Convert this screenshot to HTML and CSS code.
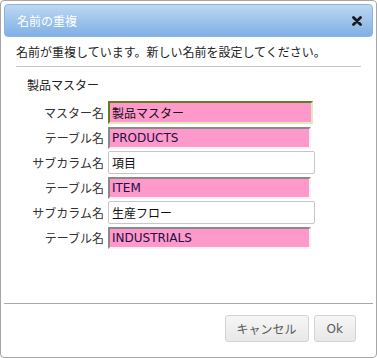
FILE: index.html
```html
<!DOCTYPE html>
<html lang="ja">
<head>
  <meta charset="UTF-8">
  <title>名前の重複</title>
  <link rel="stylesheet" href="styles.css">
</head>
<body>
  <div class="dialog">
    <div class="titlebar">
      <span class="title">名前の重複</span>
      <span class="close">
        <svg width="10" height="10" viewBox="0 0 10 10">
          <path d="M1.5 1.5 L8.5 8.5 M8.5 1.5 L1.5 8.5" stroke="#1a1a1a" stroke-width="2.8" stroke-linecap="round"/>
        </svg>
      </span>
    </div>
    <div class="content">
      <p class="message">名前が重複しています。新しい名前を設定してください。</p>
      <div class="rule"></div>
      <p class="section">製品マスター</p>
      <div class="form">
        <label>マスター名</label>
        <input class="field pink focus" value="製品マスター">
        <label>テーブル名</label>
        <input class="field pink" value="PRODUCTS" readonly>
        <label>サブカラム名</label>
        <input class="field plain" value="項目">
        <label>テーブル名</label>
        <input class="field pink" value="ITEM" readonly>
        <label>サブカラム名</label>
        <input class="field plain" value="生産フロー">
        <label>テーブル名</label>
        <input class="field pink" value="INDUSTRIALS" readonly>
      </div>
    </div>
    <div class="footer">
      <button class="btn">キャンセル</button>
      <button class="btn ok">Ok</button>
    </div>
  </div>
</body>
</html>
```

FILE: styles.css
```css
* {
    margin: 0;
    padding: 0;
    box-sizing: border-box;
}
body {
    font-family: "Noto Sans CJK JP", "DejaVu Sans", sans-serif;
    font-size: 12px;
    color: #222;
    background: #fff;
}
.dialog {
    width: 377px;
    height: 358px;
    border: 1px solid #a6a6a6;
    border-radius: 4px;
    padding: 3px;
    display: flex;
    flex-direction: column;
}
.titlebar {
    height: 33px;
    border: 1px solid #8cb3de;
    border-radius: 4px;
    background: linear-gradient(#bdd8f2, #7fafe5);
    display: flex;
    align-items: center;
    justify-content: space-between;
    padding: 0 10px 0 12px;
}
.title {
    color: #fff;
    font-size: 12px;
    line-height: 16px;
}
.close {
    display: flex;
    margin-top: 1px;
}
.content {
    flex: 1;
    padding: 0 12px;
}
.message {
    margin-top: 7px;
    line-height: 16px;
}
.rule {
    margin-top: 6px;
    height: 1px;
    background: #c4c4c4;
}
.section {
    margin-top: 10px;
    padding-left: 11px;
    line-height: 16px;
}
.form {
    margin-top: 7px;
    display: grid;
    grid-template-columns: 88px 1fr;
    grid-auto-rows: 25px;
    column-gap: 4px;
    align-items: center;
}
.form label {
    text-align: right;
    line-height: 16px;
    color: #333;
}
.field {
    font-family: "DejaVu Sans", "Noto Sans CJK JP", sans-serif;
    font-size: 12px;
    color: #111;
    height: 22px;
    padding: 0 2px;
    outline: none;
}
.pink {
    width: 203px;
    background: #ff99cc;
    border: 2px solid;
    border-color: #8a8a8a #f4f4f4 #f4f4f4 #8a8a8a;
    color: #1c1040;
}
.pink.focus {
    width: 205px;
    height: 23px;
    color: #111;
    border-color: #667a22 #dcebbd #dcebbd #667a22;
}
.plain {
    width: 207px;
    height: 23px;
    background: #fff;
    border: 1px solid #c6c6c6;
    border-radius: 2px;
    padding: 0 3px;
}
.footer {
    border-top: 1px solid #a9a9a9;
    padding: 11px 17px 12px 0;
    display: flex;
    justify-content: flex-end;
    gap: 5px;
}
.btn {
    height: 27px;
    padding: 0 11px;
    font-family: "Noto Sans CJK JP", "DejaVu Sans", sans-serif;
    font-size: 12px;
    color: #5a5a5a;
    background: linear-gradient(#f6f6f6, #e8e8e8);
    border: 1px solid #d3d3d3;
    border-radius: 3px;
}
.ok {
    font-family: "DejaVu Sans", sans-serif;
    padding: 0 12px;
}
```
